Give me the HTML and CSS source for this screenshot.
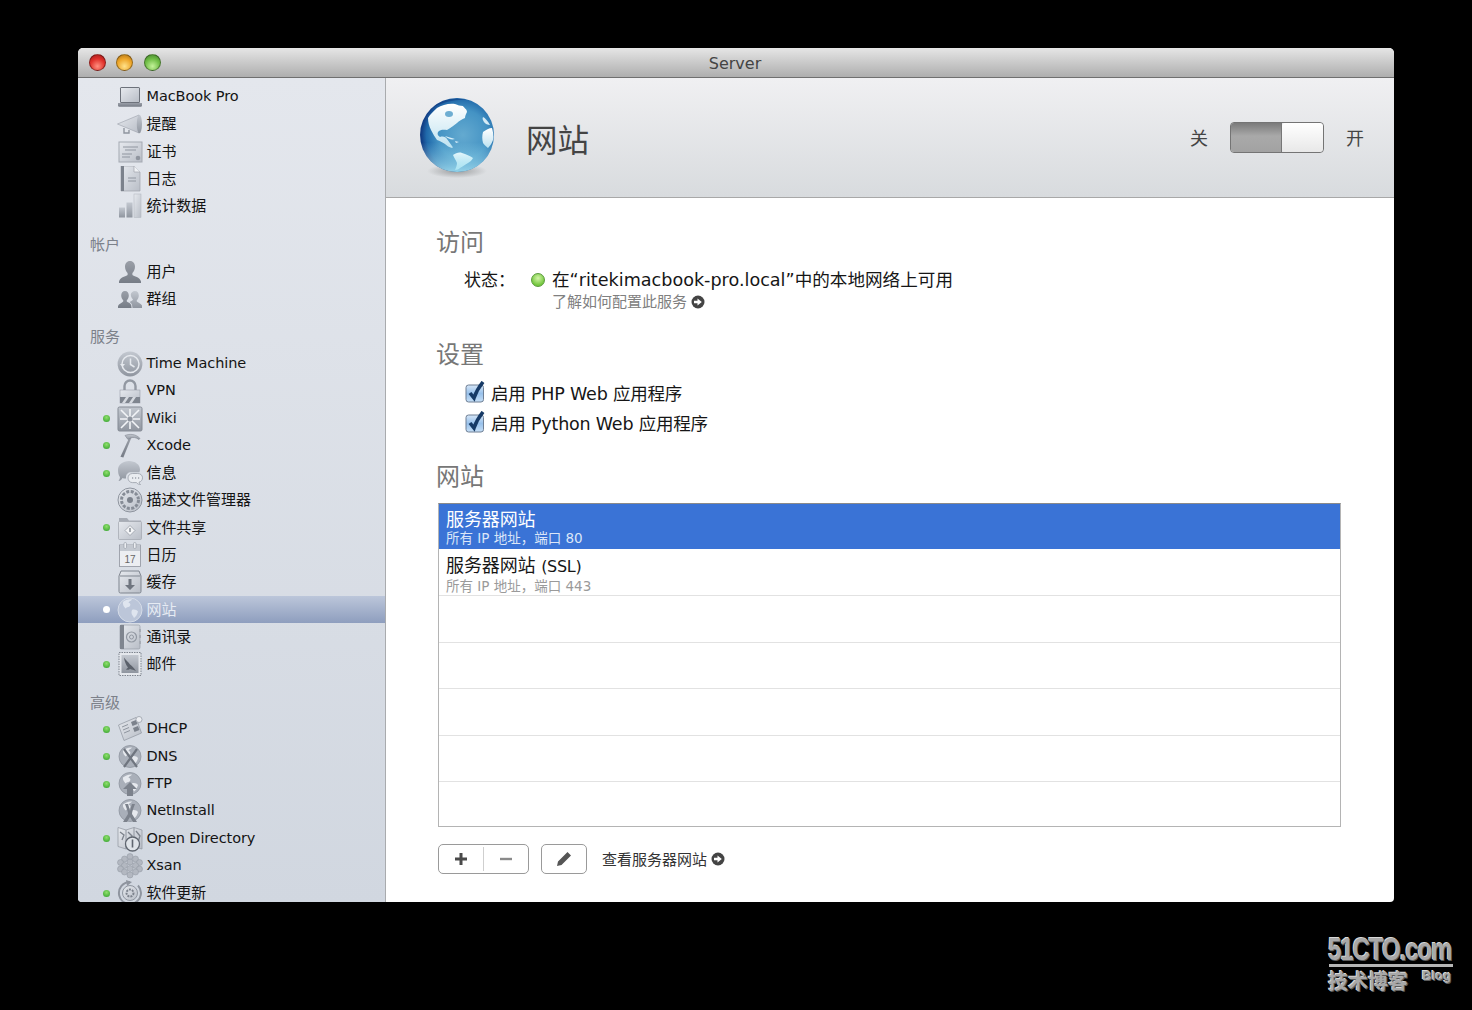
FILE: index.html
```html
<!DOCTYPE html>
<html lang="zh-CN">
<head>
  <meta charset="UTF-8">
  <title>Server</title>
  <link rel="stylesheet" href="styles.css">
</head>
<body>
  <!-- shared icon symbols -->
  <svg class="sprite" aria-hidden="true">
    <defs>
      <linearGradient id="metal" x1="0" y1="0" x2="0" y2="1">
        <stop offset="0" stop-color="#c3c8d0"/><stop offset="1" stop-color="#8f959f"/>
      </linearGradient>
      <linearGradient id="pale" x1="0" y1="0" x2="1" y2="1">
        <stop offset="0" stop-color="#e6e9ee"/><stop offset="1" stop-color="#b9bec7"/>
      </linearGradient>
      <linearGradient id="dark" x1="0" y1="0" x2="0" y2="1">
        <stop offset="0" stop-color="#9a9fa8"/><stop offset="1" stop-color="#767c86"/>
      </linearGradient>
      <radialGradient id="ocean" cx="0.58" cy="0.5" r="0.56">
        <stop offset="0" stop-color="#64aad0"/><stop offset="0.6" stop-color="#4493c4"/><stop offset="0.88" stop-color="#2069aa"/><stop offset="1" stop-color="#123f86"/>
      </radialGradient>
      <linearGradient id="glow" x1="0" y1="0" x2="0" y2="1">
        <stop offset="0.6" stop-color="#9fe0f0" stop-opacity="0"/><stop offset="1" stop-color="#a8e6f4" stop-opacity=".85"/>
      </linearGradient>
      <linearGradient id="land" x1="0" y1="0" x2="0" y2="1">
        <stop offset="0" stop-color="#ffffff"/><stop offset="1" stop-color="#bfe2f0"/>
      </linearGradient>
      <radialGradient id="under" cx="0.5" cy="0.5" r="0.5">
        <stop offset="0" stop-color="#000" stop-opacity=".3"/><stop offset="1" stop-color="#000" stop-opacity="0"/>
      </radialGradient>
      <linearGradient id="check-box" x1="0" y1="0" x2="0" y2="1">
        <stop offset="0" stop-color="#d6e6f7"/><stop offset="0.5" stop-color="#98c1eb"/><stop offset="1" stop-color="#c6dff6"/>
      </linearGradient>

      <symbol id="i-laptop" viewBox="0 0 26 26">
        <rect x="3" y="3" width="20" height="16" rx="1.5" fill="#6d727b"/>
        <rect x="4" y="4" width="18" height="14" fill="url(#pale)"/>
        <path d="M1 19h24v2.4q0 1.3-1.4 1.3H2.4Q1 22.7 1 21.4z" fill="url(#dark)"/>
      </symbol>
      <symbol id="i-horn" viewBox="0 0 26 26">
        <path d="M0.5 13 22 4v18z" fill="url(#pale)" stroke="#9aa0aa" stroke-width=".6"/>
        <ellipse cx="22.4" cy="13" rx="2.6" ry="9.2" fill="url(#metal)"/>
        <path d="M7 17v5h5v-3" fill="none" stroke="#8f959f" stroke-width="1.4"/>
      </symbol>
      <symbol id="i-cert" viewBox="0 0 26 26">
        <rect x="2" y="3" width="23" height="20" fill="url(#pale)" stroke="#a4a9b2"/>
        <path d="M6 8h15M8 11h11M5 15h10M5 18h8" stroke="#9096a0" stroke-width="1"/>
        <circle cx="21" cy="19" r="2.3" fill="#8f959f"/>
      </symbol>
      <symbol id="i-log" viewBox="0 0 26 26">
        <path d="M4 0h13l6 6v19H4z" fill="url(#pale)" stroke="#a0a5ae" stroke-width=".7"/>
        <rect x="4" y="0" width="3" height="25" fill="#7c828c"/>
        <path d="M17 0v6h6" fill="#f0f2f5" stroke="#a0a5ae" stroke-width=".7"/>
        <path d="M11 12h8M11 15h8" stroke="#9096a0"/>
      </symbol>
      <symbol id="i-stats" viewBox="0 0 26 26">
        <rect x="2" y="14.5" width="6" height="10" fill="url(#metal)"/>
        <rect x="9.5" y="9.5" width="6" height="15" fill="url(#metal)"/>
        <rect x="17" y="1" width="7" height="23.5" fill="url(#pale)" stroke="#b0b5bd" stroke-width=".5"/>
      </symbol>
      <symbol id="i-user" viewBox="0 0 26 26">
        <path d="M13 2c3.2 0 5 2.5 5 5.8 0 3-1.400 5.200-2.600 6.300v2c1.500 1.200 7.600 2 8.600 6.400V24H2v-1.500c1-4.400 7.100-5.200 8.600-6.400v-2C9.400 13 8 10.800 8 7.800 8 4.500 9.800 2 13 2z" fill="url(#dark)"/>
      </symbol>
      <symbol id="i-group" viewBox="0 0 26 26">
        <path d="M8 5c2.400 0 3.800 1.900 3.800 4.400 0 2.200-1 3.800-2 4.700v1.500c1.200 1 3.600 1.500 4.400 3.400l.4 3H1v-2c.8-2 4-2.700 5.200-4.400v-1.500c-1-.9-2-2.500-2-4.700C4.200 6.900 5.600 5 8 5z" fill="url(#dark)"/>
        <path d="M18 5c2.400 0 3.800 1.900 3.800 4.400 0 2.200-1 3.800-2 4.700v1.500c1.200 1 4.400 2 5.200 4v2.400H15.500l-.5-3.300c-.6-1.400-1.800-2-2.400-2.600 1.200-.5 2.500-1.300 3.200-2v-1c-1-.9-2-2.500-2-4.700C13.800 6.900 15.600 5 18 5z" fill="url(#metal)"/>
      </symbol>
      <symbol id="i-clock" viewBox="0 0 26 26">
        <circle cx="13" cy="13" r="12.4" fill="url(#metal)"/>
        <circle cx="13.5" cy="13" r="8.5" fill="none" stroke="#e6e9ee" stroke-width="1.5"/>
        <path d="M3 13h5l-2.500 3z" fill="#e6e9ee"/>
        <path d="M13.500 7.500V13.500l4 2.500" fill="none" stroke="#e6e9ee" stroke-width="1.5"/>
      </symbol>
      <symbol id="i-lock" viewBox="0 0 26 26">
        <path d="M7.500 12V8a5.500 5.500 0 0 1 11 0v4" fill="none" stroke="#9298a2" stroke-width="2.4"/>
        <rect x="3" y="12" width="20" height="13" fill="url(#pale)" stroke="#8f959f" stroke-width=".5"/>
        <path d="M3 19h20v6H3z" fill="#7f858f"/>
        <path d="M5 25l4-6h3l-4 6zM12 25l4-6h3l-4 6z" fill="#d5d9df"/>
      </symbol>
      <symbol id="i-wiki" viewBox="0 0 26 26">
        <rect x="1" y="1" width="24" height="24" rx="1.5" fill="url(#metal)" stroke="#858b95"/>
        <path d="M13 13 4 4M13 13 22 4M13 13 4 22M13 13 22 22M13 13V3M13 13V23M13 13H3M13 13H23" stroke="#f2f4f7" stroke-width="1.6"/>
        <circle cx="13" cy="13" r="2.5" fill="#8f959f"/>
      </symbol>
      <symbol id="i-hammer" viewBox="0 0 26 26">
        <path d="M12 4 9 25H6l4-21z" fill="url(#dark)" transform="rotate(14 10 14)"/>
        <path d="M8 2.500c5-2 11-1.500 15 3l-1 1c-3-2.200-6-2.500-8.500-1.500L11 6.500z" fill="url(#metal)" stroke="#7f858f" stroke-width=".6"/>
      </symbol>
      <symbol id="i-chat" viewBox="0 0 26 26">
        <path d="M12 1c6 0 11 3.500 11 8.500 0 1-.2 2-.6 2.800H14c-3 0-5 2-5 5v1.200c-1 .1-2.600-.1-3.500-.5C4.500 20 3 20.800 1.500 21c1-1.200 1.500-2.500 1.400-4C1.500 15 1 12.500 1 10 1 4.500 6 1 12 1z" fill="url(#metal)"/>
        <path d="M15.500 13.500h5c3 0 5 1.700 5 4.300 0 2.200-1.500 4-3.500 4.400.2 1 .8 1.800 1.500 2.300-1.800 0-3.200-.6-4-1.900h-4c-2.600 0-4.500-2-4.500-4.600 0-2.600 2-4.500 4.500-4.500z" fill="#e9ecf0" stroke="#8f959f" stroke-width=".7"/>
        <path d="M15 18h1.200M18 18h1.200M21 18h1.200" stroke="#777d87" stroke-width="1.2"/>
      </symbol>
      <symbol id="i-gear" viewBox="0 0 26 26">
        <circle cx="13" cy="13" r="12" fill="url(#pale)" stroke="#8f959f"/>
        <circle cx="13" cy="13" r="8.5" fill="none" stroke="#868c96" stroke-width="3" stroke-dasharray="3 1.500"/>
        <circle cx="13" cy="13" r="3" fill="#7c828c"/>
      </symbol>
      <symbol id="i-folder" viewBox="0 0 26 26">
        <path d="M2 3h8l2 2.500h12V7H2z" fill="#a7acb5"/>
        <rect x="1.500" y="6.500" width="23" height="18" rx="1" fill="url(#pale)" stroke="#a0a5ae" stroke-width=".7"/>
        <path d="M13 10.500 18 15.500 13 20.500 8 15.500z" fill="#f4f5f7" stroke="#8f959f" stroke-width=".7"/>
        <path d="M13 13v4" stroke="#777d87" stroke-width="1.3"/>
      </symbol>
      <symbol id="i-cal" viewBox="0 0 26 26">
        <rect x="2.500" y="3" width="21" height="21.500" fill="#eceef2" stroke="#8f959f" stroke-width=".8"/>
        <rect x="3" y="3.500" width="20" height="5.500" fill="#c3c8d0"/>
        <rect x="7" y="0.500" width="2.500" height="6" rx="1.2" fill="#eceef2" stroke="#8f959f" stroke-width=".6"/>
        <rect x="16.500" y="0.500" width="2.500" height="6" rx="1.2" fill="#eceef2" stroke="#8f959f" stroke-width=".6"/>
        <text x="13" y="21" text-anchor="middle" class="cal-day">17</text>
      </symbol>
      <symbol id="i-box" viewBox="0 0 26 26">
        <path d="M4 2h18l2 5v15.500q0 1.500-1.500 1.500h-19Q2 24 2 22.500V7z" fill="url(#pale)" stroke="#7f858f"/>
        <path d="M3 7h20" stroke="#7f858f"/>
        <path d="M11.500 10h3v6H18l-5 5-5-5h3.500z" fill="#6f757f"/>
      </symbol>
      <symbol id="i-book" viewBox="0 0 26 26">
        <rect x="3" y="1" width="20" height="24" rx="1.5" fill="url(#pale)" stroke="#8f959f" stroke-width=".6"/>
        <rect x="3" y="1" width="4" height="24" fill="#7f858f"/>
        <circle cx="14.500" cy="13" r="5" fill="none" stroke="#9298a2" stroke-width="1.2"/>
        <circle cx="14.500" cy="13" r="2" fill="none" stroke="#9298a2"/>
        <path d="M23 5v3M23 11v3M23 17v3" stroke="#a7acb5" stroke-width="2"/>
      </symbol>
      <symbol id="i-stamp" viewBox="0 0 26 26">
        <rect x="2" y="1.500" width="22" height="23" fill="#e4e7ec" stroke="#7f858f" stroke-width="1" stroke-dasharray="1.500 1"/>
        <rect x="4.500" y="4" width="17" height="18" fill="url(#metal)"/>
        <path d="M7 6.500c2 3 4.500 4.500 6 7 1.500.8 4 3.500 6 6.500-2.500-1-4-1.500-6-2-1.500 1-3 1-4 .5l2-2c-2-2.500-3.500-6-4-10z" fill="#5b616b"/>
      </symbol>
      <symbol id="i-dhcp" viewBox="0 0 26 26">
        <path d="M1.500 9 19 1.500 24.500 17 7 24.500z" fill="url(#pale)" stroke="#8f959f" stroke-width=".7"/>
        <path d="M5 11l6-2.500M6 14l6-2.500M7 17l6-2.500" stroke="#8f959f"/>
        <path d="M14 6l5-2 1.500 4-5 2zM16 12l5-2 1.500 4-5 2z" fill="#7c828c"/>
        <circle cx="22" cy="3.500" r="3" fill="#eceef2" stroke="#8f959f" stroke-width=".7"/>
      </symbol>
      <symbol id="i-earth" viewBox="0 0 26 26">
        <circle cx="13" cy="12.500" r="11" fill="#a9afb9" stroke="#8f959f" stroke-width=".8"/>
        <path d="M6 6.500c2-2 6-3.500 9-3-1 1.500-3 1.500-3.500 3.500 2 0 2.500 2 1 3.500-1.500 1-3 .5-4 2-1-1.500-3-3-2.500-6zM15 12.500c2-1 5 0 6 1.500-.5 2.500-2 5-4 6.500-.5-2-2.500-3-2.500-5 0-1 0-2 .5-3z" fill="#e6e9ee"/>
      </symbol>
      <symbol id="i-dns" viewBox="0 0 26 26">
        <use href="#i-earth"/>
        <path d="M7 5 20 23M20 5 7 23" stroke="#6f757f" stroke-width="2.2"/>
      </symbol>
      <symbol id="i-ftp" viewBox="0 0 26 26">
        <use href="#i-earth"/>
        <path d="M13 11l7 7h-4v7h-6v-7H6z" fill="#7c828c"/>
      </symbol>
      <symbol id="i-net" viewBox="0 0 26 26">
        <use href="#i-earth"/>
        <path d="M8 6c2 5 3 8 3 10l-5 8h4l3-5 3 5h4l-5-8c0-2 1-5 3-10h-3c-1 3-1.500 5-2 7-.5-2-1-4-2-7z" fill="#7c828c"/>
      </symbol>
      <symbol id="i-map" viewBox="0 0 26 26">
        <path d="M1 1.500 9 4l8-2.500L25 4v19l-8-2-8 2-8-2.500z" fill="url(#pale)" stroke="#8f959f" stroke-width=".7"/>
        <path d="M9 4v19M17 1.500V21" stroke="#8f959f"/>
        <path d="M3 6l4 3-2 5M11 6l4 4-2 4M19 5l4 5-2 6" fill="none" stroke="#7c828c" stroke-width="1.3"/>
        <circle cx="15.500" cy="18" r="7" fill="#dfe3e8" stroke="#5f656f" stroke-width="1.3"/>
        <path d="M15.500 13.500v8" stroke="#5f656f" stroke-width="1.6"/>
      </symbol>
      <symbol id="i-xsan" viewBox="0 0 26 26">
        <g fill="#b3b8c1" stroke="#8f959f" stroke-width=".5">
          <circle cx="13" cy="3.500" r="3"/><circle cx="7.500" cy="6" r="3"/><circle cx="18.500" cy="6" r="3"/><circle cx="3.500" cy="9.500" r="3"/><circle cx="13" cy="9" r="3"/><circle cx="22.500" cy="9.500" r="3"/>
          <circle cx="7.500" cy="12.500" r="3"/><circle cx="18.500" cy="12.500" r="3"/><circle cx="3.500" cy="16" r="3"/><circle cx="13" cy="15.500" r="3"/><circle cx="22.500" cy="16" r="3"/>
          <circle cx="7.500" cy="19" r="3"/><circle cx="18.500" cy="19" r="3"/><circle cx="13" cy="22" r="3"/>
        </g>
      </symbol>
      <symbol id="i-update" viewBox="0 0 26 26">
        <path d="M13 2a11 11 0 1 0 8 3.500" fill="none" stroke="#8f959f" stroke-width="2"/>
        <path d="M9 0l6 2-5 4z" fill="#8f959f"/>
        <circle cx="13" cy="13" r="7.500" fill="url(#pale)" stroke="#8f959f"/>
        <circle cx="13" cy="13" r="3.500" fill="none" stroke="#7c828c" stroke-width="2" stroke-dasharray="2 1"/>
      </symbol>
      <symbol id="i-earth-on" viewBox="0 0 26 26">
        <circle cx="13" cy="13" r="12" fill="#bcc6d9" stroke="#d5dce8"/>
        <path d="M6 5c2-2 6-3 9-2.500-1 1.500-3 1.500-3.500 3.500 2 0 2.500 2 1 3.500-1.500 1-3 .5-4 2-1-1.500-3-3-2.500-6.500zM15 13c2-1 5 0 6 1.500-.5 2.500-2 5-4 6.500-.5-2-2.500-3-2.500-5 0-1 0-2 .5-3z" fill="#dfe5ef"/>
      </symbol>
      <symbol id="i-go" viewBox="0 0 14 14">
        <circle cx="7" cy="7" r="6.500" fill="#444"/>
        <path d="M3 5.800h3.500V3.400L10.800 7 6.500 10.600V8.200H3z" fill="#fff"/>
      </symbol>
    </defs>
  </svg>

  <div class="window">
    <header class="titlebar">
      <div class="lights">
        <span class="light light-red"></span>
        <span class="light light-yellow"></span>
        <span class="light light-green"></span>
      </div>
      <div class="title">Server</div>
    </header>

    <div class="columns">
      <nav class="sidebar">
        <ul class="nav-list">
          <li class="nav-row"><span class="dot-slot"></span><svg class="nav-icon"><use href="#i-laptop"/></svg><span class="nav-label">MacBook Pro</span></li>
          <li class="nav-row"><span class="dot-slot"></span><svg class="nav-icon"><use href="#i-horn"/></svg><span class="nav-label cn">提醒</span></li>
          <li class="nav-row"><span class="dot-slot"></span><svg class="nav-icon"><use href="#i-cert"/></svg><span class="nav-label cn">证书</span></li>
          <li class="nav-row"><span class="dot-slot"></span><svg class="nav-icon"><use href="#i-log"/></svg><span class="nav-label cn">日志</span></li>
          <li class="nav-row"><span class="dot-slot"></span><svg class="nav-icon"><use href="#i-stats"/></svg><span class="nav-label cn">统计数据</span></li>
        </ul>

        <h3 class="nav-head">帐户</h3>
        <ul class="nav-list">
          <li class="nav-row"><span class="dot-slot"></span><svg class="nav-icon"><use href="#i-user"/></svg><span class="nav-label cn">用户</span></li>
          <li class="nav-row"><span class="dot-slot"></span><svg class="nav-icon"><use href="#i-group"/></svg><span class="nav-label cn">群组</span></li>
        </ul>

        <h3 class="nav-head">服务</h3>
        <ul class="nav-list">
          <li class="nav-row"><span class="dot-slot"></span><svg class="nav-icon"><use href="#i-clock"/></svg><span class="nav-label">Time Machine</span></li>
          <li class="nav-row"><span class="dot-slot"></span><svg class="nav-icon"><use href="#i-lock"/></svg><span class="nav-label">VPN</span></li>
          <li class="nav-row"><span class="dot-slot"><i class="dot"></i></span><svg class="nav-icon"><use href="#i-wiki"/></svg><span class="nav-label">Wiki</span></li>
          <li class="nav-row"><span class="dot-slot"><i class="dot"></i></span><svg class="nav-icon"><use href="#i-hammer"/></svg><span class="nav-label">Xcode</span></li>
          <li class="nav-row"><span class="dot-slot"><i class="dot"></i></span><svg class="nav-icon"><use href="#i-chat"/></svg><span class="nav-label cn">信息</span></li>
          <li class="nav-row"><span class="dot-slot"></span><svg class="nav-icon"><use href="#i-gear"/></svg><span class="nav-label cn">描述文件管理器</span></li>
          <li class="nav-row"><span class="dot-slot"><i class="dot"></i></span><svg class="nav-icon"><use href="#i-folder"/></svg><span class="nav-label cn">文件共享</span></li>
          <li class="nav-row"><span class="dot-slot"></span><svg class="nav-icon"><use href="#i-cal"/></svg><span class="nav-label cn">日历</span></li>
          <li class="nav-row"><span class="dot-slot"></span><svg class="nav-icon"><use href="#i-box"/></svg><span class="nav-label cn">缓存</span></li>
          <li class="nav-row selected"><span class="dot-slot"><i class="dot"></i></span><svg class="nav-icon"><use href="#i-earth-on"/></svg><span class="nav-label cn">网站</span></li>
          <li class="nav-row"><span class="dot-slot"></span><svg class="nav-icon"><use href="#i-book"/></svg><span class="nav-label cn">通讯录</span></li>
          <li class="nav-row"><span class="dot-slot"><i class="dot"></i></span><svg class="nav-icon"><use href="#i-stamp"/></svg><span class="nav-label cn">邮件</span></li>
        </ul>

        <h3 class="nav-head">高级</h3>
        <ul class="nav-list">
          <li class="nav-row"><span class="dot-slot"><i class="dot"></i></span><svg class="nav-icon"><use href="#i-dhcp"/></svg><span class="nav-label">DHCP</span></li>
          <li class="nav-row"><span class="dot-slot"><i class="dot"></i></span><svg class="nav-icon"><use href="#i-dns"/></svg><span class="nav-label">DNS</span></li>
          <li class="nav-row"><span class="dot-slot"><i class="dot"></i></span><svg class="nav-icon"><use href="#i-ftp"/></svg><span class="nav-label">FTP</span></li>
          <li class="nav-row"><span class="dot-slot"></span><svg class="nav-icon"><use href="#i-net"/></svg><span class="nav-label">NetInstall</span></li>
          <li class="nav-row"><span class="dot-slot"><i class="dot"></i></span><svg class="nav-icon"><use href="#i-map"/></svg><span class="nav-label">Open Directory</span></li>
          <li class="nav-row"><span class="dot-slot"></span><svg class="nav-icon"><use href="#i-xsan"/></svg><span class="nav-label">Xsan</span></li>
          <li class="nav-row"><span class="dot-slot"><i class="dot"></i></span><svg class="nav-icon"><use href="#i-update"/></svg><span class="nav-label cn">软件更新</span></li>
        </ul>
      </nav>

      <main class="pane">
        <div class="pane-head">
          <svg class="globe" viewBox="0 0 80 84">
            <ellipse cx="40" cy="74" rx="30" ry="7" fill="url(#under)"/>
            <circle cx="40" cy="38" r="37" fill="url(#ocean)"/>
            <!-- north america and greenland -->
            <path d="M11 21c2-4 6-7 9-10 5-3 12-5 18-4 3 1 5 2 8 2 1 2 4 3 4 6-1 2-2 4-2 6-3 1-6 3-8 5-3 2-6 5-10 7-3 0-6-1-9 2-1 2 0 4 2 5 3-1 6 0 7 2l5 7c1 1 1 2 0 2-3-1-5-2-7-4-3-2-5-3-8-4-2-3-4-6-6-10-2-4-3-8-3-12z" fill="url(#land)"/>
            <ellipse cx="32" cy="17" rx="4" ry="3" fill="#6eaed2"/>
            <path d="M28 39c3 1 7 2 10 3-3 1-7 0-10-3zM38 44l4 1-3 1z" fill="#d8eef8"/>
            <!-- south america -->
            <path d="M36 58c3-2 6-3 9-2 4 1 8 3 11 5-1 2-3 4-5 5-3 2-5 3-8 5-1 1-3 2-5 2 1-2 2-5 2-7-1-3-3-5-4-8z" fill="url(#land)"/>
            <!-- africa and europe -->
            <path d="M66 35c3-2 6-4 9-4 1 4 2 8 1 12-1 3-3 6-5 8-2-2-4-3-5-5-1-4-1-7 0-11z" fill="url(#land)"/>
            <path d="M66 20c2 1 5 4 7 8-2 0-5-1-6-3-1-2-2-3-1-5z" fill="#d5ebf5"/>
            <circle cx="40" cy="38" r="37" fill="url(#glow)"/>
            <path d="M16 10C25 3 38 0 50 3c-11-1-23 2-34 7z" fill="#0f3a80" opacity=".55"/>
          </svg>
          <h1 class="pane-title">网站</h1>
          <div class="switch-row">
            <span class="switch-word">关</span>
            <div class="switch"><span class="switch-off"></span><span class="switch-knob"></span></div>
            <span class="switch-word">开</span>
          </div>
        </div>

        <div class="pane-body">
          <h2 class="section-title">访问</h2>
          <div class="status">
            <span class="status-label">状态：</span>
            <i class="status-led"></i>
            <div>
              <div class="status-text">在“ritekimacbook-pro.local”中的本地网络上可用</div>
              <div class="status-link">了解如何配置此服务 <svg class="go"><use href="#i-go"/></svg></div>
            </div>
          </div>

          <h2 class="section-title settings-title">设置</h2>
          <div class="check-row">
            <svg class="check" viewBox="0 0 20 22"><rect x="1" y="4" width="17.500" height="17" rx="2.5" fill="url(#check-box)" stroke="#6f7f94"/><path d="M5 12l4 5c2-6 5-11 9-16" fill="none" stroke="#173a66" stroke-width="3.6"/></svg>
            <span>启用 PHP Web 应用程序</span>
          </div>
          <div class="check-row">
            <svg class="check" viewBox="0 0 20 22"><rect x="1" y="4" width="17.500" height="17" rx="2.5" fill="url(#check-box)" stroke="#6f7f94"/><path d="M5 12l4 5c2-6 5-11 9-16" fill="none" stroke="#173a66" stroke-width="3.6"/></svg>
            <span>启用 Python Web 应用程序</span>
          </div>

          <h2 class="section-title sites-title">网站</h2>
          <div class="site-list">
            <div class="site-row active">
              <div class="site-name">服务器网站</div>
              <div class="site-sub">所有 IP 地址，端口 80</div>
            </div>
            <div class="site-row">
              <div class="site-name">服务器网站 <span class="site-tag">(SSL)</span></div>
              <div class="site-sub">所有 IP 地址，端口 443</div>
            </div>
            <div class="site-row"></div>
            <div class="site-row"></div>
            <div class="site-row"></div>
            <div class="site-row"></div>
            <div class="site-row last"></div>
          </div>

          <div class="list-tools">
            <div class="btn btn-pair">
              <button class="btn-part"><svg class="glyph" viewBox="0 0 14 14"><path d="M5.500 1h3v4.500H13v3H8.500V13h-3V8.500H1v-3h4.500z" fill="#4a4a4a"/></svg></button>
              <button class="btn-part"><svg class="glyph" viewBox="0 0 14 14"><rect x="1" y="5.800" width="12" height="2.400" fill="#8a8a8a"/></svg></button>
            </div>
            <button class="btn btn-edit"><svg class="glyph pencil" viewBox="0 0 16 16"><path d="M11.500 1 15 4.500 5.500 14 1 15l1-4.500zM1.700 11.500 4.500 14.300" fill="#555"/></svg></button>
            <div class="view-link">查看服务器网站 <svg class="go"><use href="#i-go"/></svg></div>
          </div>
        </div>
      </main>
    </div>
  </div>

  <div class="watermark">
    <div class="wm-main">51CTO.com</div>
    <div class="wm-rule"></div>
    <div class="wm-foot">
      <span class="wm-cn">技术博客</span>
      <span class="wm-blog">Blog</span>
    </div>
  </div>
</body>
</html>
```

FILE: styles.css
```css
* {
  box-sizing: border-box;
}

html,
body {
  height: 1010px;
}

body {
  margin: 0;
  overflow: hidden;
  background: #000;
  color: #161616;
  font-family: "DejaVu Sans", "Noto Sans CJK SC", sans-serif;
  font-size: 15px;
}

.sprite {
  display: block;
  width: 0;
  height: 0;
}

.cal-day {
  font-family: "Liberation Sans", sans-serif;
  font-size: 10px;
  fill: #666;
}

/* window frame */
.window {
  display: flex;
  flex-direction: column;
  width: 1316px;
  height: 854px;
  margin: 48px 0 0 78px;
  border-radius: 5px 5px 4px 4px;
  overflow: hidden;
  background: #fff;
}

.titlebar {
  display: flex;
  align-items: center;
  position: relative;
  flex: none;
  height: 30px;
  padding-left: 11px;
  background: linear-gradient(180deg, #e6e6e6, #d2d2d2 35%, #aeaeae);
  border-bottom: 1px solid #6f6f6f;
}

.lights {
  display: flex;
  gap: 10.3px;
}

.light {
  width: 17px;
  height: 17px;
  border-radius: 50%;
  border: 1px solid rgba(0, 0, 0, 0.35);
}

.light-red {
  background: radial-gradient(circle at 50% 75%, #ff8f80, #e0302a 55%, #9c1a18);
}

.light-yellow {
  background: radial-gradient(circle at 50% 75%, #ffe28a, #eda528 55%, #a96f14);
}

.light-green {
  background: radial-gradient(circle at 50% 75%, #c4f29a, #6fbd45 55%, #42802a);
}

.title {
  position: absolute;
  left: 0;
  right: 0;
  text-align: center;
  padding: 2px 2px 0 0;
  font-size: 16px;
  color: #444;
}

.columns {
  display: flex;
  flex: 1;
  min-height: 0;
}

/* left source list */
.sidebar {
  flex: none;
  width: 308px;
  padding-top: 5.5px;
  overflow: hidden;
  background: linear-gradient(180deg, #e4e7ed, #d1d7e0);
  border-right: 1px solid #a9abae;
}

.nav-list {
  list-style: none;
  margin: 0;
  padding: 0;
}

.nav-row {
  display: flex;
  align-items: center;
  height: 27.3px;
  color: #141414;
}

.dot-slot {
  display: flex;
  justify-content: center;
  flex: none;
  width: 39px;
  padding-left: 18px;
}

.dot {
  width: 7px;
  height: 7px;
  border-radius: 50%;
  background: radial-gradient(circle at 50% 35%, #8fe06c, #2f9e2a);
}

.nav-icon {
  flex: none;
  width: 26px;
  height: 26px;
}

.nav-label {
  margin-left: 3.5px;
  padding-bottom: 2px;
  white-space: nowrap;
  font-size: 14.5px;
  letter-spacing: -0.1px;
}

/* CJK glyphs sit low in the DejaVu line box */
.nav-label.cn {
  padding-bottom: 3px;
  font-size: 15px;
}

.nav-head {
  height: 27.3px;
  margin: 10.6px 0 0;
  padding-left: 12px;
  line-height: 28px;
  font-size: 15px;
  font-weight: normal;
  color: #7c818a;
}

.nav-row.selected {
  background: linear-gradient(180deg, #bcc6da, #8e9ebe);
  color: #e6ebf3;
}

.nav-row.selected .dot {
  background: #fff;
}

/* right pane */
.pane {
  flex: 1;
  min-width: 0;
}

.pane-head {
  display: flex;
  align-items: center;
  height: 120px;
  padding: 0 30px 0 31px;
  background: linear-gradient(180deg, #f0f0f2, #d8dbde);
  border-bottom: 1px solid #a8a8a8;
}

.globe {
  flex: none;
  width: 80px;
  height: 84px;
  margin-top: 3px;
}

.pane-title {
  margin: 0 0 0 29px;
  font-size: 31.5px;
  font-weight: normal;
  color: #444;
}

.switch-row {
  display: flex;
  align-items: center;
  gap: 22px;
  margin-left: auto;
  font-size: 18px;
  color: #444;
}

.switch-word {
  padding-bottom: 2px;
}

.switch {
  display: flex;
  width: 94px;
  height: 31px;
  border: 1px solid #747474;
  border-radius: 4px;
  overflow: hidden;
}

.switch-off {
  flex: 1;
  background: linear-gradient(180deg, #7a7a7a, #a9a9a9 45%, #a2a2a2);
  border-right: 1px solid #777;
}

.switch-knob {
  width: 41px;
  border-radius: 3px;
  background: linear-gradient(180deg, #ffffff, #e8e8e8);
}

.pane-body {
  padding: 28px 52px 0 50px;
}

.section-title {
  margin: 0;
  height: 34px;
  line-height: 34px;
  font-size: 24px;
  font-weight: normal;
  color: #777;
}

.settings-title {
  margin-top: 26px;
}

.sites-title {
  margin-top: 23px;
  margin-bottom: 9px;
}

.status {
  display: flex;
  align-items: flex-start;
  margin: 8px 0 0 28px;
}

.status-label {
  width: 67px;
  font-size: 17px;
  line-height: 24px;
}

.status-led {
  flex: none;
  width: 14px;
  height: 14px;
  margin: 5px 7px 0 0;
  border-radius: 50%;
  border: 1px solid #5a9a3c;
  background: radial-gradient(circle at 50% 35%, #d3f5a8, #74c73e 70%);
}

.status-text {
  font-size: 17.6px;
  line-height: 24px;
}

.status-link {
  display: flex;
  align-items: center;
  gap: 4px;
  font-size: 15px;
  line-height: 20px;
  color: #808080;
}

.go {
  flex: none;
  width: 14px;
  height: 14px;
}

.check-row {
  display: flex;
  align-items: center;
  gap: 6px;
  height: 30px;
  margin-left: 29px;
  font-size: 17.5px;
  letter-spacing: -0.2px;
}

.settings-title + .check-row {
  margin-top: 5px;
}

.check {
  flex: none;
  width: 20px;
  height: 22px;
}

/* site table */
.site-list {
  width: 903px;
  margin-left: 2px;
  border: 1px solid #b4b4b4;
  border-top-color: #8a8a8a;
}

.site-row {
  height: 46.6px;
  padding: 6px 7px 0;
  border-bottom: 1px solid #e2e2e2;
}

.site-row.last {
  height: 43.5px;
  border-bottom: none;
}

.site-row.active {
  height: 45.4px;
  padding-top: 5px;
  background: #3a73d6;
  border-bottom-color: #3a73d6;
  color: #fff;
}

.site-name {
  font-size: 18px;
  line-height: 22px;
  letter-spacing: -0.1px;
}

.site-tag {
  font-size: 16px;
  letter-spacing: -0.3px;
}

.site-sub {
  font-size: 13.5px;
  line-height: 17px;
  color: #9a9a9a;
  white-space: nowrap;
}

.active .site-sub {
  margin-top: -1px;
  color: #dbe6f8;
}

.list-tools {
  display: flex;
  align-items: center;
  gap: 12px;
  margin: 17px 0 0 2px;
}

.btn {
  display: flex;
  align-items: center;
  justify-content: center;
  height: 30px;
  padding: 0;
  background: #fff;
  border: 1px solid #9a9a9a;
  border-radius: 5px;
}

.btn-pair {
  width: 91px;
}

.btn-part {
  display: flex;
  align-items: center;
  justify-content: center;
  flex: 1;
  height: 24px;
  padding: 0;
  background: none;
  border: none;
}

.btn-part + .btn-part {
  border-left: 1px solid #cfcfcf;
}

.btn-edit {
  width: 46px;
}

.glyph {
  width: 14px;
  height: 14px;
}

.pencil {
  width: 16px;
  height: 16px;
}

.view-link {
  display: flex;
  align-items: center;
  gap: 4px;
  margin-left: 3px;
  font-size: 15px;
  color: #333;
}

/* 51CTO mark in the page corner */
.watermark {
  width: 130px;
  margin: 34px 0 0 1328px;
  color: #a8a8a8;
  font-weight: bold;
  text-shadow: 1px 1px 0 #5a5a5a, -1px -1px 0 #d8d8d8;
}

.wm-main {
  height: 28px;
  font-family: "Liberation Sans", sans-serif;
  font-size: 31px;
  line-height: 28px;
  letter-spacing: -1.5px;
  white-space: nowrap;
  transform: scaleX(0.78);
  transform-origin: left center;
}

.wm-rule {
  width: 124px;
  height: 3px;
  margin-left: 1px;
  background: #b5b5b5;
}

.wm-foot {
  display: flex;
  align-items: flex-start;
}

.wm-cn {
  width: 94px;
  margin-top: 3px;
  font-size: 20px;
  line-height: 25px;
}

.wm-blog {
  margin-top: 1px;
  font-family: "Liberation Sans", sans-serif;
  font-size: 13px;
  line-height: 16px;
}
```
